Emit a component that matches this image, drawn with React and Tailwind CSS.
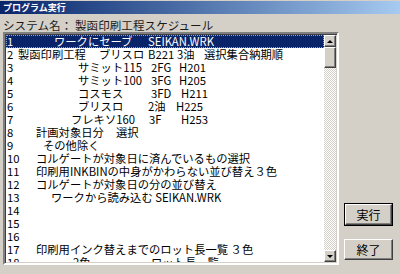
import React from 'react';

const FONT = "font-['Noto_Sans_CJK_JP','Noto_Sans',sans-serif]";

// each row: list of [text, minWidthClass] segments; the min width places the next segment
const rows = [
  [['1', 'min-w-[47px]'], ['ワークにセーブ', 'min-w-[94px]'], ['SEIKAN.WRK', '']],
  [['2', 'min-w-[11px]'], ['製函印刷工程', 'min-w-[81px]'], ['ブリスロ', 'min-w-[49px]'], ['B221', 'min-w-[29px]'], ['3油', 'min-w-[27px]'], ['選択集合納期順', '']],
  [['3', 'min-w-[71px]'], ['サミット115', 'min-w-[73px]'], ['2FG', 'min-w-[28px]'], ['H201', '']],
  [['4', 'min-w-[71px]'], ['サミット100', 'min-w-[73px]'], ['3FG', 'min-w-[28px]'], ['H205', '']],
  [['5', 'min-w-[71px]'], ['コスモス', 'min-w-[73px]'], ['3FD', 'min-w-[30px]'], ['H211', '']],
  [['6', 'min-w-[71px]'], ['ブリスロ', 'min-w-[70px]'], ['2油', 'min-w-[28px]'], ['H225', '']],
  [['7', 'min-w-[64px]'], ['フレキソ160', 'min-w-[78px]'], ['3F', 'min-w-[32px]'], ['H253', '']],
  [['8', 'min-w-[29px]'], ['計画対象日分', 'min-w-[80px]'], ['選択', '']],
  [['9', 'min-w-[36px]'], ['その他除く', '']],
  [['10', 'min-w-[29px]'], ['コルゲートが対象日に済んでいるもの選択', '']],
  [['11', 'min-w-[29px]'], ['印刷用INKBINの中身がかわらない並び替え３色', '']],
  [['12', 'min-w-[29px]'], ['コルゲートが対象日の分の並び替え', '']],
  [['13', 'min-w-[44px]'], ['ワークから読み込む SEIKAN.WRK', '']],
  [['14', '']],
  [['15', '']],
  [['16', '']],
  [['17', 'min-w-[29px]'], ['印刷用インク替えまでのロット長一覧 ３色', '']],
  [['18', 'min-w-[66px]'], ['2色', 'min-w-[78px]'], ['ロット長一覧', '']],
];

const raised =
  'border border-t-white border-l-white border-b-[#404040] border-r-[#404040] shadow-[inset_-1px_-1px_0_#808080]';

const ScrollButton = ({ up }) => (
  <div className={`h-[12px] w-[12px] bg-[#d4d0c8] flex items-center justify-center ${raised}`}>
    {up ? (
      <div className="w-0 h-0 border-x-[3px] border-x-transparent border-b-[3px] border-b-black" />
    ) : (
      <div className="w-0 h-0 border-x-[3px] border-x-transparent border-t-[3px] border-t-black" />
    )}
  </div>
);

const Button = ({ label, isDefault }) => (
  <div className={isDefault ? 'border border-black' : ''}>
    <div
      className={`${isDefault ? 'w-[47px]' : 'w-[49px]'} h-[21px] bg-[#d4d0c8] flex items-center justify-center text-[12px] text-black ${raised}`}
    >
      {label}
    </div>
  </div>
);

export default function App() {
  return (
    <div className={`w-[400px] h-[274px] bg-[#d4d0c8] overflow-hidden ${FONT}`}>
      {/* Title bar */}
      <div className="h-[14px] border-t border-[#d4d0c8] bg-gradient-to-r from-[#0a246a] to-[#a6caf0] flex items-center pl-[3px]">
        <span className="text-white font-bold text-[9px] leading-none">プログラム実行</span>
      </div>

      <div className="flex">
        <div className="pl-[3px]">
          <div className="h-[18px] flex items-end text-[11.5px] leading-[14px] text-[#1a1a1a] tracking-[0.1px]">
            システム名： 製函印刷工程スケジュール
          </div>

          {/* Listbox */}
          <div className="w-[336px] h-[233px] border-2 border-t-[#808080] border-l-[#808080] border-b-white border-r-white shadow-[inset_1px_1px_0_#404040,inset_-1px_-1px_0_#d4d0c8] flex p-[1px]">
            <div className="w-[320px] h-full bg-white overflow-hidden text-[11.3px] leading-[13px] text-black">
              {rows.map((segs, i) => (
                <div
                  key={i}
                  className={`h-[13px] flex whitespace-pre pl-[1px] ${
                    i === 0 ? 'bg-[#0a246a] text-white outline-1 outline-dotted outline-[#8aa0d0] -outline-offset-1' : ''
                  }`}
                >
                  {segs.map(([t, w], j) => (
                    <span key={j} className={`block shrink-0 h-[13px] leading-[13px] ${w}`}>
                      {t}
                    </span>
                  ))}
                </div>
              ))}
            </div>
            <div className="w-[12px] h-full flex flex-col bg-[repeating-conic-gradient(#d4d0c8_0_25%,#ffffff_0_50%)] bg-[length:2px_2px]">
              <ScrollButton up />
              <div className={`h-[21px] w-[12px] bg-[#d4d0c8] ${raised}`} />
              <div className="flex-1" />
              <ScrollButton />
            </div>
          </div>
        </div>

        <div className="ml-[5px] pt-[189px] flex flex-col gap-[13px]">
          <Button label="実行" isDefault />
          <Button label="終了" />
        </div>
      </div>
    </div>
  );
}
